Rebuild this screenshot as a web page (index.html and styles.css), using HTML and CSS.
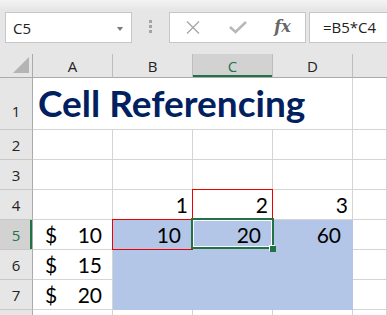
FILE: index.html
```html
<!DOCTYPE html>
<html>
<head>
<meta charset="utf-8">
<title>Cell Referencing</title>
<link rel="stylesheet" href="styles.css">
</head>
<body>
<div class="toolbar">
  <div class="namebox">
    <span>C5</span>
    <span class="caret"></span>
  </div>
  <div class="grip"><i></i><i></i><i></i></div>
  <div class="fxbox">
    <span class="slot">
      <svg width="14" height="13" viewBox="0 0 14 13"><path d="M1 0.5 L13 12.5 M13 0.5 L1 12.5" stroke="#a8a8a8" stroke-width="1.4" fill="none"/></svg>
    </span>
    <span class="slot">
      <svg width="18" height="13" viewBox="0 0 18 13"><path d="M1 6 L6.5 11 L17 1" stroke="#b8b8b8" stroke-width="2.6" fill="none"/></svg>
    </span>
    <span class="slot fx">fx</span>
  </div>
  <div class="formula">=B5*C4</div>
</div>
<div class="sheet">
  <!-- column headers -->
  <div class="hd corner"><span class="tri"></span></div>
  <div class="hd">A</div>
  <div class="hd">B</div>
  <div class="hd sel-col">C</div>
  <div class="hd">D</div>
  <div class="hd last"></div>

  <!-- row 1 -->
  <div class="rh rh1">1</div>
  <div class="cell title">Cell Referencing</div>
  <div class="cell"></div>

  <!-- row 2 -->
  <div class="rh">2</div>
  <div class="cell"></div><div class="cell"></div><div class="cell"></div><div class="cell"></div><div class="cell"></div>

  <!-- row 3 -->
  <div class="rh">3</div>
  <div class="cell"></div><div class="cell"></div><div class="cell"></div><div class="cell"></div><div class="cell"></div>

  <!-- row 4 -->
  <div class="rh">4</div>
  <div class="cell"></div>
  <div class="cell">1</div>
  <div class="cell ref">2</div>
  <div class="cell">3</div>
  <div class="cell"></div>

  <!-- row 5 -->
  <div class="rh sel-row">5</div>
  <div class="cell money"><span>$</span><span>10</span></div>
  <div class="cell fill pad ref">10</div>
  <div class="cell fill pad active">20</div>
  <div class="cell fill pad">60</div>
  <div class="cell"></div>

  <!-- row 6 -->
  <div class="rh">6</div>
  <div class="cell money"><span>$</span><span>15</span></div>
  <div class="cell fill"></div><div class="cell fill"></div><div class="cell fill"></div>
  <div class="cell"></div>

  <!-- row 7 -->
  <div class="rh">7</div>
  <div class="cell money"><span>$</span><span>20</span></div>
  <div class="cell fill"></div><div class="cell fill"></div><div class="cell fill"></div>
  <div class="cell"></div>

  <!-- row 8 -->
  <div class="rh"></div>
  <div class="cell"></div><div class="cell"></div><div class="cell"></div><div class="cell"></div><div class="cell"></div>
</div>
</body>
</html>
```

FILE: styles.css
```css
html,body {
  margin: 0;
  padding: 0;
  width: 100%;
  height: 100%;
  overflow: hidden;
  background: #fff;
}
body {
  font-family: "Open Sans", "Noto Sans", sans-serif;
  color: #222;
}
/* formula bar */
.toolbar {
  height: 54px;
  box-sizing: border-box;
  padding-top: 12px;
  display: flex;
  align-items: flex-start;
  background: linear-gradient(#f3f3f3, #e6e6e6 10px);
}
.toolbar > div {
  flex: none;
}
.namebox {
  margin-left: 5px;
  width: 127px;
  height: 31px;
  box-sizing: border-box;
  border: 1px solid #c6c6c6;
  background: #fff;
  display: flex;
  align-items: center;
  justify-content: space-between;
  padding: 0 8px 0 7px;
  font-size: 15px;
}
.caret {
  width: 0;
  height: 0;
  border-top: 4px solid #777;
  border-left: 3px solid transparent;
  border-right: 3px solid transparent;
  margin-top: 3px;
}
.grip {
  margin: 8px 17px 0 17px;
  display: flex;
  flex-direction: column;
  gap: 2px;
}
.grip i {
  display: block;
  width: 3px;
  height: 3px;
  background: #a4a4a4;
}
.fxbox {
  width: 137px;
  height: 31px;
  box-sizing: border-box;
  border: 1px solid #c6c6c6;
  background: #fff;
  display: flex;
  align-items: center;
}
.slot {
  width: 45px;
  display: flex;
  justify-content: center;
}
.fx {
  font-family: "DejaVu Serif", "Liberation Serif", serif;
  font-style: italic;
  font-weight: bold;
  font-size: 16px;
  color: #666;
  margin-top: -2px;
}
.formula {
  margin-left: 3px;
  width: 100px;
  height: 31px;
  box-sizing: border-box;
  border: 1px solid #c6c6c6;
  background: #fff;
  padding-left: 13px;
  font-size: 15px;
  line-height: 29px;
}
/* sheet grid */
.sheet {
  display: grid;
  grid-template-columns: 33px repeat(4, 80px) 1fr;
  grid-template-rows: 24px 52px repeat(7, 30px);
}
.hd {
  background: #e6e6e6;
  border-right: 1px solid #bdbdbd;
  border-bottom: 1px solid #ababab;
  box-sizing: border-box;
  display: flex;
  align-items: center;
  justify-content: center;
  font-size: 15px;
  color: #222;
}
.hd.last {
  border-right: none;
}
.corner {
  border-right-color: #ababab;
  align-items: flex-end;
  justify-content: flex-end;
  padding: 0 3px 4px 0;
}
.tri {
  width: 0;
  height: 0;
  border-left: 16px solid transparent;
  border-bottom: 16px solid #b4b4b4;
}
.sel-col {
  background: #d2d2d2;
  color: #217346;
  box-shadow: inset 0 -2px #217346;
}
.rh {
  background: #e6e6e6;
  border-right: 1px solid #ababab;
  border-bottom: 1px solid #c8c8c8;
  box-sizing: border-box;
  display: flex;
  align-items: center;
  justify-content: center;
  font-size: 15px;
  color: #222;
}
.rh1 {
  align-items: flex-end;
  padding-bottom: 8px;
}
.sel-row {
  background: #d2d2d2;
  color: #217346;
  box-shadow: inset -2px 0 #217346;
}
.cell {
  border-right: 1px solid #d4d4d4;
  border-bottom: 1px solid #d4d4d4;
  box-sizing: border-box;
  display: flex;
  align-items: flex-end;
  justify-content: flex-end;
  padding: 0 4px 4px 0;
  font-family: Lato, "Open Sans", sans-serif;
  font-size: 21px;
  line-height: 1;
  color: #000;
}
.title {
  grid-column: span 4;
  justify-content: flex-start;
  padding: 0 0 8px 5px;
  font-weight: bold;
  font-size: 37px;
  color: #002060;
}
.money {
  justify-content: space-between;
  padding: 0 10px 4px 12px;
}
.pad {
  padding-right: 11px;
}
.fill {
  background: #b4c6e7;
  border-color: #b4c6e7;
}
/* formula references and active cell */
.ref,.active {
  position: relative;
}
.ref::after {
  content: "";
  position: absolute;
  top: -1px;
  left: -1px;
  right: -1px;
  bottom: -1px;
  border: 1px solid #e00;
}
.active::after {
  content: "";
  position: absolute;
  top: -2px;
  left: -2px;
  right: -2px;
  bottom: 0;
  border: 2px solid #217346;
  box-shadow: inset 0 0 0 1px #fff;
}
.active::before {
  content: "";
  position: absolute;
  right: -4px;
  bottom: -3px;
  width: 6px;
  height: 6px;
  background: #217346;
  box-shadow: -1px -1px 0 #fff;
  z-index: 1;
}
```
